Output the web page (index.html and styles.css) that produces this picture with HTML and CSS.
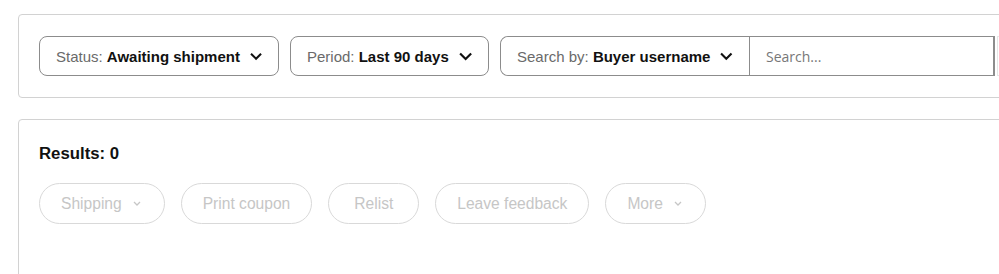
FILE: index.html
```html
<!DOCTYPE html>
<html lang="en">
<head>
<meta charset="utf-8">
<title>Orders</title>
<link rel="stylesheet" href="styles.css">
</head>
<body>
<div class="page">
  <section class="card filters">
    <button class="select status">
      <span class="lbl">Status: </span><b>Awaiting shipment</b>
      <svg class="chev" viewBox="0 0 12 8"><path d="M1 1.2l5 5 5-5" /></svg>
    </button>
    <button class="select period">
      <span class="lbl">Period: </span><b>Last 90 days</b>
      <svg class="chev" viewBox="0 0 12 8"><path d="M1 1.2l5 5 5-5" /></svg>
    </button>
    <div class="searchgroup">
      <button class="select inner">
        <span class="lbl">Search by: </span><b>Buyer username</b>
        <svg class="chev" viewBox="0 0 12 8"><path d="M1 1.2l5 5 5-5" /></svg>
      </button>
      <input class="searchinput" type="text" placeholder="Search...">
    </div>
    <button class="searchbtn" aria-label="Search"></button>
  </section>

  <section class="card results">
    <h2 class="count">Results: 0</h2>
    <div class="actions">
      <button class="pill has-menu" disabled>Shipping <svg class="mini" viewBox="0 0 8 5"><path d="M1 1l3 3 3-3" /></svg></button>
      <button class="pill" disabled>Print coupon</button>
      <button class="pill relist" disabled>Relist</button>
      <button class="pill" disabled>Leave feedback</button>
      <button class="pill has-menu" disabled>More <svg class="mini" viewBox="0 0 8 5"><path d="M1 1l3 3 3-3" /></svg></button>
    </div>
  </section>
</div>
</body>
</html>
```

FILE: styles.css
```css
* { box-sizing: border-box; }

html, body {
  margin: 0;
  padding: 0;
  background: #fff;
  overflow: hidden;
}

body {
  font-family: "Liberation Sans", Arial, sans-serif;
  color: #111;
}

.page {
  padding: 14px 0 0 18px;
  width: 1120px;
}

.card {
  border: 1px solid #d2d2d2;
  border-radius: 4px;
  background: #fff;
}

.filters {
  display: flex;
  align-items: center;
  padding: 21px 20px;
}

.select {
  display: flex;
  align-items: center;
  height: 40px;
  padding: 0 16px 0 16px;
  border: 1px solid #8c8c8c;
  border-radius: 8px;
  background: #fff;
  font-family: inherit;
  font-size: 15px;
  color: #111;
  white-space: pre;
  cursor: pointer;
}

.select .lbl { color: #6a6a6a; }
.select b { font-weight: 700; color: #111; }

.chev {
  width: 14px;
  height: 9px;
  margin-left: 10px;
  fill: none;
  stroke: #111;
  stroke-width: 2;
}

.status { width: 240px; margin-right: 11px; }
.period { width: 199px; margin-right: 11px; }

.searchgroup {
  display: flex;
  height: 40px;
  border: 1px solid #8c8c8c;
  border-right-width: 2px;
  border-radius: 8px 0 0 8px;
}

.searchgroup .inner {
  border: none;
  border-right: 1px solid #8c8c8c;
  border-radius: 8px 0 0 8px;
  height: 38px;
  width: 249px;
}

.searchinput {
  width: 243px;
  height: 38px;
  border: none;
  outline: none;
  padding: 0 16px;
  font-family: "Open Sans", "Noto Sans", sans-serif;
  font-size: 14px;
  color: #111;
}

.searchinput::placeholder { color: #777; }

.searchbtn {
  width: 60px;
  height: 40px;
  margin-left: 2px;
  border: 1px solid #e6e6e6;
  background: #fff;
}

.results {
  margin-top: 21px;
  padding: 24px 20px 60px;
}

.count {
  margin: 0;
  font-size: 16.8px;
  line-height: 20px;
  font-weight: 700;
  color: #111;
}

.actions {
  display: flex;
  gap: 16px;
  margin-top: 19px;
}

.pill {
  display: flex;
  align-items: center;
  justify-content: center;
  height: 41px;
  padding: 0 21px;
  border: 1px solid #d9d9d9;
  border-radius: 21px;
  background: #fff;
  font-family: inherit;
  font-size: 15.6px;
  color: #c6c6c6;
}

.pill.has-menu { padding-right: 23px; }

.relist { min-width: 91px; }

.mini {
  width: 8px;
  height: 5px;
  margin-left: 11px;
  fill: none;
  stroke: #c6c6c6;
  stroke-width: 1.3;
}
```
